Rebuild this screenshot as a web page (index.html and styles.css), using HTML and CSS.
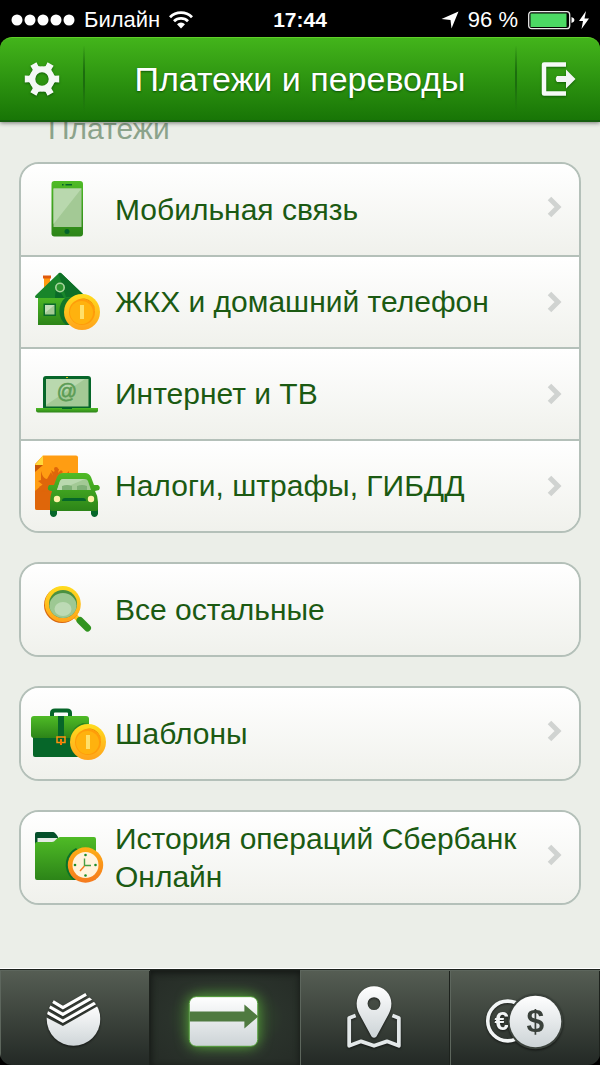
FILE: index.html
```
<!DOCTYPE html>
<html lang="ru">
<head>
<meta charset="utf-8">
<meta name="viewport" content="width=device-width, initial-scale=1">
<title>Платежи и переводы</title>
<link rel="stylesheet" href="styles.css">
</head>
<body>
<svg class="defs" width="0" height="0" aria-hidden="true">
  <defs>
    <linearGradient id="green" x1="0" y1="0" x2="0" y2="1"><stop offset="0" stop-color="#4fbb26"/><stop offset="1" stop-color="#2c8418"/></linearGradient>
    <linearGradient id="gold" x1="0" y1="0" x2="0" y2="1"><stop offset="0" stop-color="#ffdc1e"/><stop offset="1" stop-color="#ffa31c"/></linearGradient>
    <linearGradient id="orange" x1="0" y1="0" x2="0" y2="1"><stop offset="0" stop-color="#ffae14"/><stop offset="1" stop-color="#f57a1e"/></linearGradient>
    <linearGradient id="silver" x1="0" y1="0" x2="0" y2="1"><stop offset="0" stop-color="#ffffff"/><stop offset="1" stop-color="#ccd3d6"/></linearGradient>
    <symbol id="coin" viewBox="0 0 36 36">
      <circle cx="18" cy="18" r="18" fill="url(#gold)"/>
      <circle cx="18" cy="18" r="13" fill="#ff9c0a"/>
      <path d="M18 5a13 13 0 0 1 13 13l-2 5A12 12 0 0 0 13 6z" fill="#f08a00"/>
      <circle cx="17.500" cy="18.500" r="11.500" fill="#ffb20e"/>
      <path d="M16 11h4v14h-4z" fill="#ffe06a"/>
    </symbol>
    <symbol id="tooth" viewBox="0 0 36 36"><path d="M28 12.500l3 2.200 4.200-.2v7l-4.200-.2-3 2.200z" fill="#f4f8f5"/></symbol>
    <symbol id="chevron" viewBox="0 0 16 22"><path d="M2.500 2.500l8.500 8.500-8.500 8.500" fill="none" stroke="#d0d3d1" stroke-width="5"/></symbol>
  </defs>
</svg>

<div class="status">
  <div class="status-left">
    <svg width="64" height="12" viewBox="0 0 64 12" aria-hidden="true"><g fill="#fff"><circle cx="6" cy="6" r="5.500"/><circle cx="19" cy="6" r="5.500"/><circle cx="32" cy="6" r="5.500"/><circle cx="45" cy="6" r="5.500"/><circle cx="58" cy="6" r="5.500"/></g></svg>
    <span class="carrier">Билайн</span>
    <svg width="24" height="18" viewBox="0 0 24 18" aria-hidden="true"><g fill="none" stroke="#fff" stroke-width="2.800"><path d="M1 6.200a15.500 15.500 0 0 1 22 0"/><path d="M5 10.300a10 10 0 0 1 14 0"/></g><path d="M8 13.300a5.600 5.600 0 0 1 8 0L12 17.500z" fill="#fff"/></svg>
  </div>
  <time class="clock">17:44</time>
  <div class="status-right">
    <svg width="18" height="18" viewBox="0 0 18 18" aria-hidden="true"><path d="M17.500 .5L10.500 17.500l-1-8.500L.5 8z" fill="#fff"/></svg>
    <span class="charge">96 %</span>
    <svg width="62" height="20" viewBox="0 0 62 20" aria-hidden="true"><rect x="1.700" y="1.700" width="41" height="17" rx="3" fill="none" stroke="#e8e8e8" stroke-width="1.300"/><rect x="3.500" y="3.500" width="36" height="13.500" fill="#4cd964"/><path d="M44.500 7q3 1 3 3t-3 3z" fill="#fff"/><path d="M59 1l-7 10h4l-1.500 8 7.500-10.500h-4.500z" fill="#fff"/></svg>
  </div>
</div>

<header class="header">
  <button class="bar-button" type="button" aria-label="Настройки">
    <svg width="36" height="36" viewBox="0 0 36 36" aria-hidden="true">
      <circle cx="18" cy="18" r="9.700" fill="none" stroke="#f4f8f5" stroke-width="6"/>
      <use href="#tooth" width="36" height="36"/>
      <use href="#tooth" width="36" height="36" transform="rotate(60 18 18)"/>
      <use href="#tooth" width="36" height="36" transform="rotate(120 18 18)"/>
      <use href="#tooth" width="36" height="36" transform="rotate(180 18 18)"/>
      <use href="#tooth" width="36" height="36" transform="rotate(240 18 18)"/>
      <use href="#tooth" width="36" height="36" transform="rotate(300 18 18)"/>
    </svg>
  </button>
  <h1 class="title">Платежи и переводы</h1>
  <button class="bar-button" type="button" aria-label="Выход">
    <svg width="36" height="36" viewBox="0 0 36 36" aria-hidden="true"><path d="M25 3.500H3v29h22" fill="none" stroke="#f6faf7" stroke-width="4.500" stroke-linejoin="round"/><path d="M16 15h9V8.500L34.500 18 25 27.500V21h-9q-2.500-3 0-6z" fill="#f2f6f4"/></svg>
  </button>
</header>

<main class="content">
  <h2 class="section">Платежи</h2>

  <nav class="card" aria-label="Платежи">
    <a class="row" href="#mobile">
      <svg class="icon" viewBox="26 170 80 80" aria-hidden="true"><rect x="51.500" y="181" width="31.500" height="55.500" rx="3" fill="url(#green)"/><path d="M53.500 188.500h28v38.500h-28z" fill="#a3c995"/><path d="M53.500 188.500h28L53.500 224z" fill="#b9d8ae"/><circle cx="67" cy="231.500" r="2.500" fill="#046329"/><path d="M65.500 184h6.500v1.600h-6.500zM62 184h1.600v1.600H62z" fill="#046329"/></svg>
      <span class="label">Мобильная связь</span>
      <svg class="chevron" aria-hidden="true"><use href="#chevron"/></svg>
    </a>
    <a class="row" href="#utilities">
      <svg class="icon" viewBox="26 262 80 80" aria-hidden="true">
        <path d="M44 278h6v10l-6 5z" fill="#ff9a10"/><path d="M43 275.500h8v3h-8z" fill="#e05a0c"/>
        <path d="M38 295h44v30H38z" fill="url(#green)"/><path d="M60 276l22 20v29H66a18 18 0 0 1 0-28z" fill="#06692a" opacity=".8"/>
        <path d="M58.500 273.500q1.500-1.500 3 0L86 297l-1 1H36q-2-1 0-3z" fill="#18852a"/><path d="M58.500 273.500q1.500-1.500 3 0L86 297H66z" fill="#0d7027"/>
        <path d="M56 284l8 14h-9z" fill="#0a6b28"/><circle cx="60" cy="287.500" r="4.200" fill="#2d9530" stroke="#a9d59e" stroke-width="1.600"/>
        <path d="M43.500 303.500h12.500V316H43.500z" fill="#0a6b28"/><path d="M45 305h9.500v9.500H45z" fill="#a3c995"/><path d="M45 305h9.500l-9.500 8z" fill="#c4deba"/>
        <use href="#coin" x="64" y="294" width="36" height="36"/>
      </svg>
      <span class="label">ЖКХ и домашний телефон</span>
      <svg class="chevron" aria-hidden="true"><use href="#chevron"/></svg>
    </a>
    <a class="row" href="#internet">
      <svg class="icon" viewBox="26 354 80 80" aria-hidden="true">
        <rect x="43" y="376" width="48" height="34" rx="3" fill="#066629"/><path d="M46 379h42.500v27.500H46z" fill="#a3c995"/><path d="M46 379h39L46 405z" fill="#b9d8ae"/><path d="M66 377h2v1h-2z" fill="#d4c81c"/>
        <text class="glyph-at" x="67" y="398" text-anchor="middle" fill="#5c9c56" stroke="#5c9c56" stroke-width=".6">@</text>
        <path d="M36 408h62v2.500q0 2-2 2H38q-2 0-2-2z" fill="url(#green)"/><path d="M62 408h10v1h-10z" fill="#066629"/>
      </svg>
      <span class="label">Интернет и ТВ</span>
      <svg class="chevron" aria-hidden="true"><use href="#chevron"/></svg>
    </a>
    <a class="row" href="#taxes">
      <svg class="icon" viewBox="26 446 80 80" aria-hidden="true">
        <path d="M43 455.500h33q2 0 2 2V510H37q-2 0-2-2v-44z" fill="#ff9d12"/><path d="M35 491l20-17 10 36H37q-2 0-2-2z" fill="#df660a"/><path d="M35 465h8L35 472z" fill="#c85606"/><path d="M43 455.500V465h-8z" fill="#ffd93c"/>
        <path d="M41 471q2 8 6 8l4-7 2 4-2-6 3 2 2-4 3 1-1 4 3-3 2 2-3 3 7-2 2-2v8l-20 12-8 1 4-3-6-2 4-2-5-4 3-1z" fill="#df660a"/><circle cx="56" cy="469" r="2" fill="#df660a"/>
        <path d="M50 505h7v9q-1 3-3.500 3T50 514zM91 505h7v9q-1 3-3.500 3T91 514z" fill="#066629"/>
        <path d="M49 485h5l3-8q2-4 6-4h22q4 0 6 4l3 8h4q3 2 1 5l-4 1q3 5 3 11v7q0 2-2 2H52q-2 0-2-2v-7q0-6 2-11-5 0-4-4z" fill="url(#green)"/>
        <path d="M57 490l3-9q1-2 3-2h22q2 0 3 2l3 9z" fill="#a3c995"/><path d="M57 490l3-9q1-2 3-2h22l-14 6-4 5z" fill="#b9d8ae"/><path d="M62 490v-4q5-2 10 0v4zM77 490v-4q5-2 10 0v4z" fill="#7fb076"/>
        <path d="M62 501q0-3 3-3h18q3 0 3 3z" fill="#066629"/><circle cx="57" cy="499" r="3.200" fill="#fff0a6"/><circle cx="91" cy="499" r="3.200" fill="#fff0a6"/>
      </svg>
      <span class="label">Налоги, штрафы, ГИБДД</span>
      <svg class="chevron" aria-hidden="true"><use href="#chevron"/></svg>
    </a>
  </nav>

  <div class="card">
    <a class="row" href="#other">
      <svg class="icon" viewBox="26 569 80 80" aria-hidden="true">
        <path d="M73 613l6 6" stroke="#ffc21c" stroke-width="5"/><path d="M80 619.500l7.500 7.500" stroke="#319320" stroke-width="7" stroke-linecap="round"/>
        <circle cx="62" cy="604" r="18" fill="#d8660c"/><circle cx="62.800" cy="603" r="18" fill="url(#gold)"/><circle cx="63" cy="603" r="14" fill="#4b9040"/><ellipse cx="63" cy="604.500" rx="13.500" ry="12.500" fill="#9dc893"/><ellipse cx="63" cy="608" rx="8.500" ry="7" fill="#bddab5"/>
      </svg>
      <span class="label">Все остальные</span>
    </a>
  </div>

  <div class="card">
    <a class="row" href="#templates">
      <svg class="icon" viewBox="26 693 80 80" aria-hidden="true">
        <path d="M52 716v-4q0-2.500 3-2.500h12q3 0 3 2.500v4" fill="none" stroke="#066629" stroke-width="4"/>
        <path d="M33 734h55v20q0 2-2 2H35q-2 0-2-2z" fill="#066629"/><rect x="31" y="715" width="58" height="22" rx="3" fill="url(#green)"/><path d="M70 737q2-12 13-15l6 1v14z" fill="#288621"/>
        <path d="M58 715h6v23h-6z" fill="#066629"/><path d="M57 736h8v5.500h-8z" fill="none" stroke="#ff9110" stroke-width="1.500"/><path d="M60 738h2v6h-2z" fill="#f57905"/>
        <use href="#coin" x="70" y="723" width="36" height="36"/>
      </svg>
      <span class="label">Шаблоны</span>
      <svg class="chevron" aria-hidden="true"><use href="#chevron"/></svg>
    </a>
  </div>

  <div class="card">
    <a class="row" href="#history">
      <svg class="icon" viewBox="26 817 80 80" aria-hidden="true">
        <path d="M35 850v-17q0-2 2-2h16q2 0 5 5v14z" fill="#044f2a"/><path d="M37.500 837h20v7h-20z" fill="#e4eae4"/>
        <path d="M35 843q0-2 2-2h15q2 0 4-2.500t4-2.500h34q2 0 2 2v39q0 2-2 2H37q-2 0-2-2z" fill="url(#green)"/><path d="M73 879q-9-8-7-19 2-9 10-13l14 15-5 17z" fill="#0b7127"/>
        <circle cx="85.500" cy="864" r="17.700" fill="url(#orange)"/><circle cx="85.500" cy="864" r="13" fill="#fff3dd"/>
        <g fill="#1d8c2a"><circle cx="85.500" cy="854" r="1.300"/><circle cx="85.500" cy="874.500" r="1.300"/><circle cx="75" cy="864" r="1.300"/><circle cx="95.500" cy="864" r="1.300"/></g>
        <path d="M84.500 857.500v7H91" fill="none" stroke="#46a045" stroke-width="1.400"/><path d="M84.500 865l-4.500 5" stroke="#f57a1e" stroke-width="1.400"/>
      </svg>
      <span class="label">История операций Сбербанк Онлайн</span>
      <svg class="chevron" aria-hidden="true"><use href="#chevron"/></svg>
    </a>
  </div>
</main>

<nav class="tabs" aria-label="Разделы">
  <a class="tab" href="#home" aria-label="Главная">
    <svg class="tab-icon" viewBox="1 971 150 94" aria-hidden="true">
      <defs><clipPath id="ball"><circle cx="74" cy="1019" r="27"/></clipPath></defs>
      <g clip-path="url(#ball)"><path d="M46 1017l17.300 9 38-21.500V1048H46z" fill="url(#silver)"/><g fill="none" stroke="#fff" stroke-width="3.200"><path d="M46 1011.500l17.300 9.800 38-21.500"/><path d="M46 1004.500l17.300 9.800 38-21.500"/></g></g>
      <path d="M53.300 1001.500l10 6 23.400-13.200" fill="none" stroke="#fff" stroke-width="3.200"/>
    </svg>
  </a>
  <a class="tab tab-active" href="#payments" aria-label="Платежи" aria-current="page">
    <svg class="tab-icon glow" viewBox="151 971 150 94" aria-hidden="true"><rect x="189.500" y="996.500" width="69" height="50" rx="7" fill="url(#silver)" stroke="#529c37"/><path d="M190 1011.500h55v-7l14 12-14 12v-7h-55z" fill="#4f7a40"/></svg>
  </a>
  <a class="tab" href="#map" aria-label="Карта">
    <svg class="tab-icon" viewBox="301 971 150 94" aria-hidden="true"><path d="M356 1015.500l-6.500 2.500v28l12-4.500 13 4.500 13-4.500 12 4.500v-28l-6.500-2.500" fill="none" stroke="#e3e8e9" stroke-width="3.800" stroke-linejoin="round"/><path fill-rule="evenodd" d="M374.500 986a17.500 17.500 0 0 0-17.500 17.500c0 5 1.500 8 3 11l12 22q2.500 3 5 0l12-22c1.500-3 3-6 3-11a17.500 17.500 0 0 0-17.500-17.500zm0 11a6.500 6.500 0 1 1 0 13 6.500 6.500 0 0 1 0-13z" fill="url(#silver)"/></svg>
  </a>
  <a class="tab" href="#rates" aria-label="Курсы валют">
    <svg class="tab-icon" viewBox="451 971 150 94" aria-hidden="true"><circle cx="508" cy="1021" r="20" fill="none" stroke="#f2f5f5" stroke-width="3.600"/><text class="glyph-euro" x="502" y="1030" text-anchor="middle" fill="#f2f5f5">€</text><circle cx="536" cy="1021.500" r="28" fill="#3a413b"/><circle cx="536" cy="1021.500" r="26" fill="url(#silver)"/><text class="glyph-dollar" x="536" y="1032" text-anchor="middle" fill="#3a413b">$</text></svg>
  </a>
</nav>
</body>
</html>
```
FILE: styles.css
```
* {
  box-sizing: border-box;
}

body {
  margin: 0;
  min-height: 100vh;
  display: flex;
  flex-direction: column;
  background: #000;
  font-family: "Liberation Sans", Arial, sans-serif;
}

svg {
  display: block;
  flex: none;
}

.defs {
  position: absolute;
}

.status {
  height: 37px;
  display: grid;
  grid-template-columns: 1fr auto 1fr;
  align-items: center;
  padding: 2px 11px 0;
  color: #fff;
  font-size: 22px;
  line-height: 26px;
}

.status-left,
.status-right {
  display: flex;
  align-items: center;
  gap: 9px;
}

.status-right {
  justify-content: flex-end;
}

.clock {
  font-size: 21px;
  font-weight: bold;
}

.header {
  position: relative;
  z-index: 1;
  height: 85px;
  display: flex;
  align-items: stretch;
  border-top: 1px solid #5fd028;
  border-bottom: 2px solid #175e10;
  border-radius: 12px 12px 0 0;
  background: linear-gradient(#43b41b, #187506);
  box-shadow: 0 1px 4px rgba(0, 0, 0, 0.5);
}

.bar-button {
  width: 83px;
  border: 0;
  padding: 0;
  background: none;
  display: flex;
  align-items: center;
  justify-content: center;
  filter: drop-shadow(0 1px 1px rgba(0, 60, 0, 0.6));
}

.title {
  flex: 1;
  margin: 8px 0;
  display: flex;
  align-items: center;
  justify-content: center;
  border: solid;
  border-width: 0 2px;
  border-image: linear-gradient(transparent, #1c6d0e 40%, #1c6d0e 60%, transparent) 1;
  color: #fff;
  font-size: 34px;
  font-weight: normal;
  line-height: 40px;
  text-shadow: 0 1px 2px rgba(0, 60, 0, 0.7);
}

.content {
  flex: 1;
  padding: 0 19px 60px;
  display: flex;
  flex-direction: column;
  gap: 29px;
  background: #ebeee8;
  border-bottom: 1px solid #fff;
}

.section {
  margin: -8px 0 -11px;
  padding-left: 29px;
  color: #8ba38b;
  font-size: 30px;
  font-weight: normal;
  line-height: 30px;
}

.card {
  border: 2px solid #b4c0b9;
  border-radius: 20px;
  overflow: hidden;
}

.row {
  min-height: 91px;
  display: flex;
  align-items: center;
  gap: 9px;
  padding: 0 16px 0 5px;
  background: linear-gradient(#fff, #f0f1ec);
  color: #1b5a12;
  font-size: 30px;
  line-height: 38px;
  text-decoration: none;
}

.row + .row {
  min-height: 92px;
  border-top: 2px solid #b4c0b9;
}

.icon {
  width: 80px;
  height: 80px;
}

.label {
  flex: 1;
}

.chevron {
  width: 16px;
  height: 22px;
  margin-bottom: 6px;
}

.row + .row .chevron {
  margin-bottom: 0;
}

.glyph-at {
  font-size: 20px;
}

.glyph-euro {
  font-size: 26px;
  font-weight: bold;
}

.glyph-dollar {
  font-size: 32px;
  font-weight: bold;
}

.tabs {
  height: 96px;
  display: grid;
  grid-template-columns: repeat(4, 1fr);
  border-top: 1px solid #1c211c;
  border-radius: 0 0 12px 12px;
  overflow: hidden;
}

.tab {
  display: flex;
  align-items: flex-start;
  justify-content: center;
  border: solid #5d665d;
  border-width: 1px 0 0 1px;
  box-shadow: inset -1px 0 #1d221d;
  background: linear-gradient(#555d53, #232925);
}

.tab-active {
  border-color: #1b201c;
  background: radial-gradient(ellipse, #35562c, #2a322b 55%, #252b26);
  box-shadow: inset 0 2px 6px #141815;
}

.tab-icon {
  width: 100%;
  height: 94px;
  filter: drop-shadow(0 1px 1px rgba(0, 0, 0, 0.6));
}

.glow {
  filter: drop-shadow(0 0 7px #58a53c);
}
```
